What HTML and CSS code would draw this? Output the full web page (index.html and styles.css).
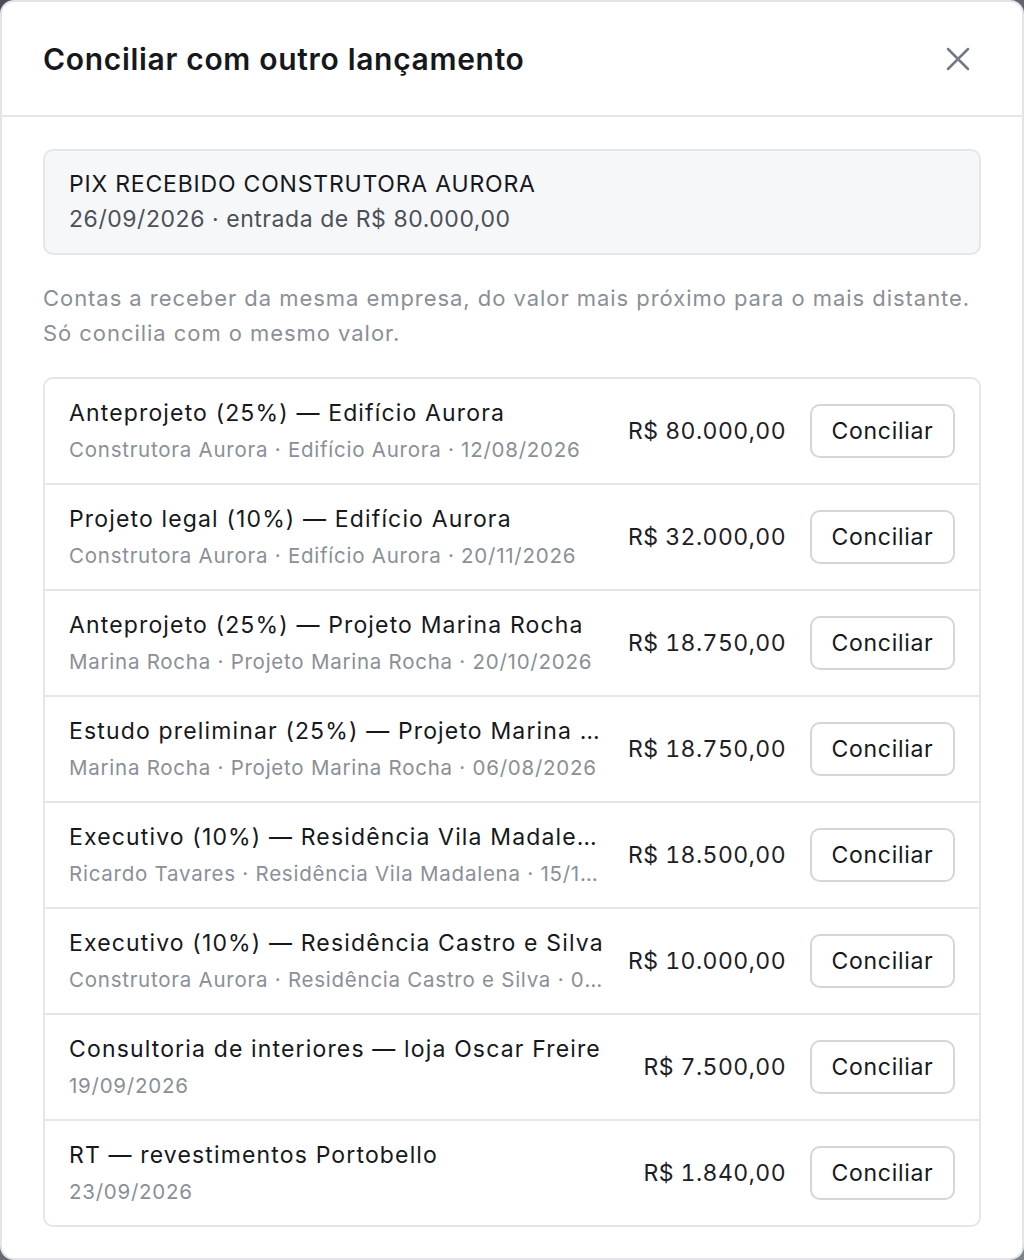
FILE: index.html
```html
<!DOCTYPE html>
<html lang="pt-BR">
<head>
<meta charset="utf-8">
<title>Conciliar com outro lançamento</title>
<link rel="stylesheet" href="styles.css">
</head>
<body>
<div class="modal">
  <header class="modal-header">
    <h1 class="modal-title">Conciliar com outro lançamento</h1>
    <button class="close-btn" aria-label="Fechar">
      <svg width="40" height="40" viewBox="0 0 24 24" fill="none" stroke="currentColor" stroke-width="1.5" stroke-linecap="round"><path d="M18 6 6 18M6 6l12 12"/></svg>
    </button>
  </header>
  <div class="modal-body">
    <div class="source">
      <div class="source-title">PIX RECEBIDO CONSTRUTORA AURORA</div>
      <div class="source-sub">26/09/2026 · entrada de R$ 80.000,00</div>
    </div>
    <p class="hint">Contas a receber da mesma empresa, do valor mais próximo para o mais distante. Só concilia com o mesmo valor.</p>
    <ul class="list">
      <li class="row">
        <div class="info"><div class="title">Anteprojeto (25%) — Edifício Aurora</div><div class="sub">Construtora Aurora · Edifício Aurora · 12/08/2026</div></div>
        <div class="amount">R$ 80.000,00</div>
        <button class="btn">Conciliar</button>
      </li>
      <li class="row">
        <div class="info"><div class="title">Projeto legal (10%) — Edifício Aurora</div><div class="sub">Construtora Aurora · Edifício Aurora · 20/11/2026</div></div>
        <div class="amount">R$ 32.000,00</div>
        <button class="btn">Conciliar</button>
      </li>
      <li class="row">
        <div class="info"><div class="title">Anteprojeto (25%) — Projeto Marina Rocha</div><div class="sub">Marina Rocha · Projeto Marina Rocha · 20/10/2026</div></div>
        <div class="amount">R$ 18.750,00</div>
        <button class="btn">Conciliar</button>
      </li>
      <li class="row">
        <div class="info"><div class="title">Estudo preliminar (25%) — Projeto Marina Rocha</div><div class="sub">Marina Rocha · Projeto Marina Rocha · 06/08/2026</div></div>
        <div class="amount">R$ 18.750,00</div>
        <button class="btn">Conciliar</button>
      </li>
      <li class="row">
        <div class="info"><div class="title">Executivo (10%) — Residência Vila Madalena</div><div class="sub">Ricardo Tavares · Residência Vila Madalena · 15/10/2026</div></div>
        <div class="amount">R$ 18.500,00</div>
        <button class="btn">Conciliar</button>
      </li>
      <li class="row">
        <div class="info"><div class="title">Executivo (10%) — Residência Castro e Silva</div><div class="sub">Construtora Aurora · Residência Castro e Silva · 02/10/2026</div></div>
        <div class="amount">R$ 10.000,00</div>
        <button class="btn">Conciliar</button>
      </li>
      <li class="row">
        <div class="info"><div class="title">Consultoria de interiores — loja Oscar Freire</div><div class="sub">19/09/2026</div></div>
        <div class="amount">R$ 7.500,00</div>
        <button class="btn">Conciliar</button>
      </li>
      <li class="row">
        <div class="info"><div class="title">RT — revestimentos Portobello</div><div class="sub">23/09/2026</div></div>
        <div class="amount">R$ 1.840,00</div>
        <button class="btn">Conciliar</button>
      </li>
    </ul>
  </div>
</div>
</body>
</html>
```
FILE: styles.css
```css
* { box-sizing: border-box; }
html, body { margin: 0; padding: 0; }
body {
  background: linear-gradient(135deg, #4b4d52 0%, #7d828b 100%);
  font-family: Inter, "Noto Sans", "Liberation Sans", sans-serif;
  color: #16181d;
  height: 1260px;
  overflow: hidden;
}
.modal {
  width: 1024px;
  height: 1260px;
  background: #fff;
  border: 2px solid #e3e4e8;
  border-radius: 14px;
  display: flex;
  flex-direction: column;
}
.modal-header {
  height: 115px;
  flex-shrink: 0;
  display: flex;
  align-items: center;
  justify-content: space-between;
  padding: 0 44px 0 41px;
  border-bottom: 2px solid #e5e6ea;
}
.modal-title {
  margin: 0;
  font-size: 30px;
  font-weight: 600;
  letter-spacing: 0.68px;
  color: #16181d;
}
.close-btn {
  background: none;
  border: 0;
  padding: 0;
  width: 40px;
  height: 40px;
  color: #737985;
  display: flex;
  align-items: center;
  justify-content: center;
  cursor: pointer;
}
.modal-body {
  padding: 32px 41px 0 41px;
}
.source {
  background: #f6f7f9;
  border: 2px solid #e5e6ea;
  border-radius: 10px;
  padding: 16px 24px;
  height: 106px;
}
.source-title {
  font-size: 23px;
  letter-spacing: 0.8px;
  line-height: 35px;
  color: #16181d;
}
.source-sub {
  font-size: 23px;
  letter-spacing: 0.55px;
  line-height: 35px;
  color: #4b5059;
}
.hint {
  margin: 26px 0 26px;
  font-size: 22px;
  letter-spacing: 0.95px;
  line-height: 35px;
  color: #8a8f98;
}
.list {
  list-style: none;
  margin: 0;
  padding: 0;
  border: 2px solid #e5e6ea;
  border-radius: 10px;
}
.row {
  height: 104px;
  display: flex;
  align-items: center;
  gap: 24px;
  padding: 0 24px;
}
.row + .row { border-top: 2px solid #e5e6ea; box-sizing: content-box; }
.info {
  flex: 1;
  min-width: 0;
  display: flex;
  flex-direction: column;
  gap: 6px;
}
.title {
  font-size: 23px;
  letter-spacing: 1.15px;
  line-height: 32px;
  color: #16181d;
  white-space: nowrap;
  overflow: hidden;
  text-overflow: ellipsis;
}
.sub {
  font-size: 20.5px;
  letter-spacing: 0.75px;
  line-height: 30px;
  color: #8a8f98;
  white-space: nowrap;
  overflow: hidden;
  text-overflow: ellipsis;
}
.amount {
  flex-shrink: 0;
  font-size: 23px;
  letter-spacing: 0.45px;
  font-variant-numeric: tabular-nums;
  color: #1d2027;
}
.btn {
  flex-shrink: 0;
  width: 145px;
  height: 54px;
  background: #fff;
  border: 2px solid #d4d6db;
  border-radius: 10px;
  font-family: inherit;
  font-size: 23px;
  letter-spacing: 0.7px;
  color: #16181d;
  cursor: pointer;
}
```
